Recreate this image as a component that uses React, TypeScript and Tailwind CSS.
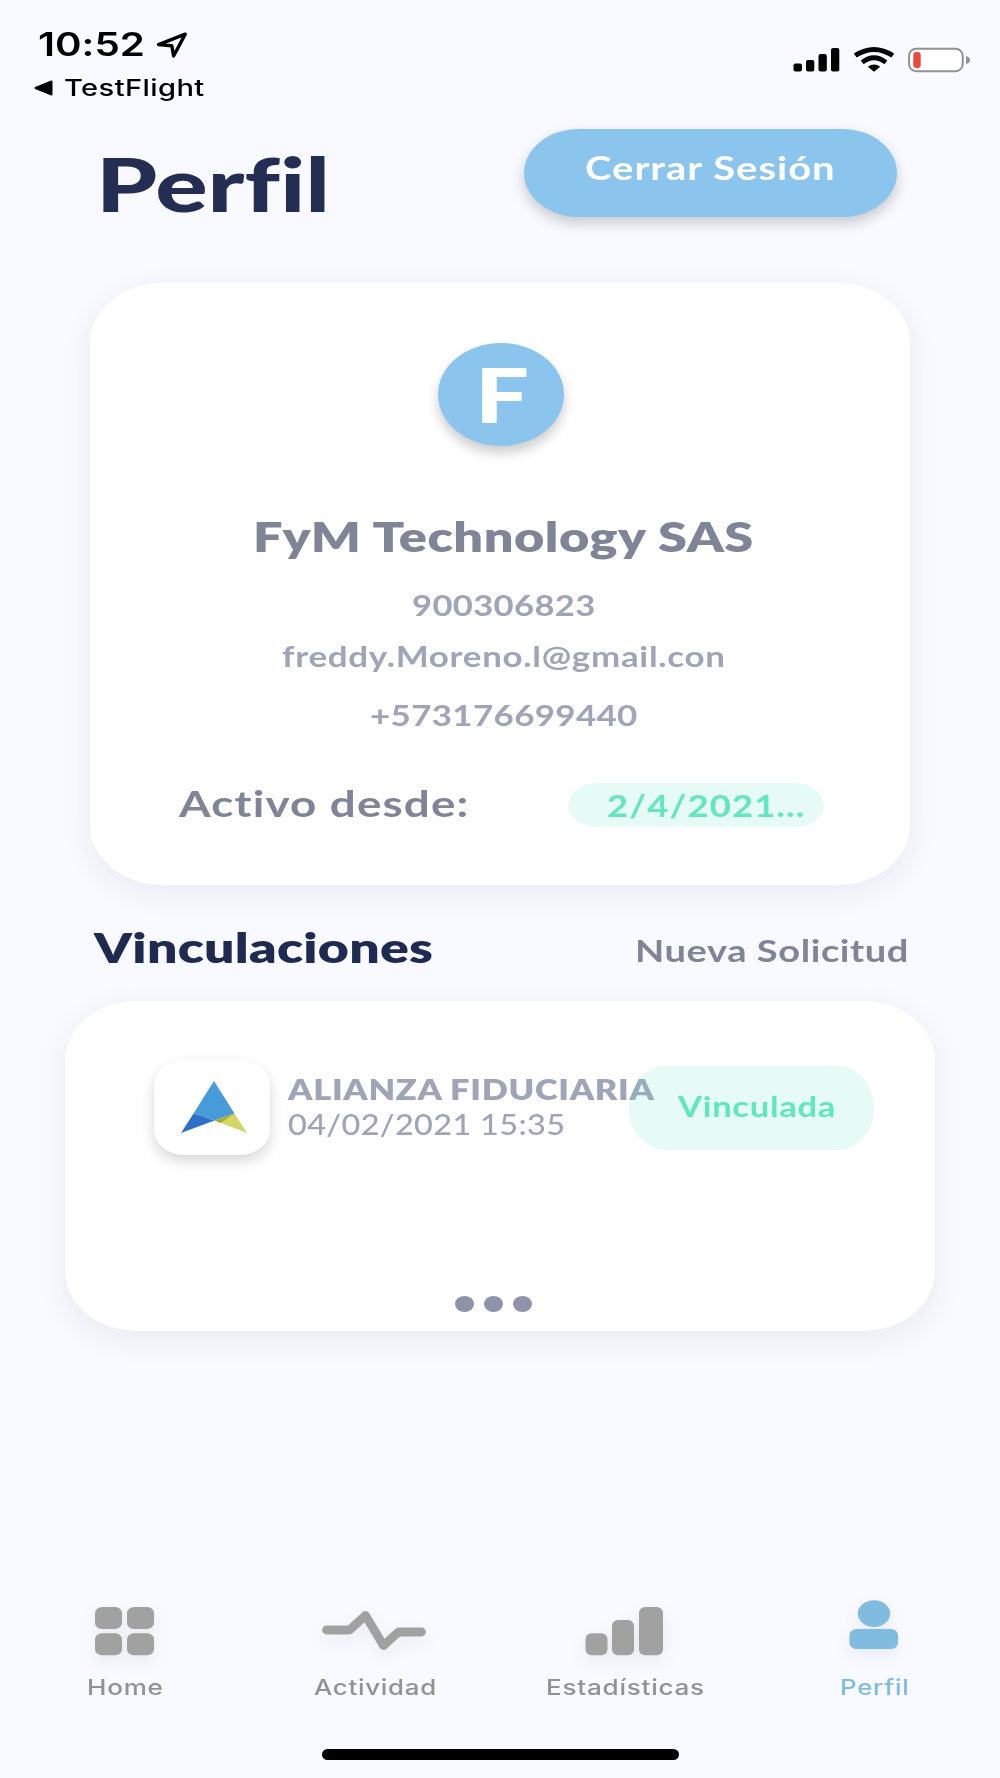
import { useLayoutEffect, useRef, useState } from "react";
import type { ReactNode } from "react";
import clsx from "clsx";

type FitTextProps = {
  width: number;
  className?: string;
  children: string;
};

// Wide lettering: stretches one line of text to the given width
const FitText = ({ width, className, children }: FitTextProps) => {
  const ref = useRef<HTMLSpanElement>(null);
  const [scale, setScale] = useState(1);

  useLayoutEffect(() => {
    if (ref.current) {
      setScale(width / ref.current.offsetWidth);
    }
  }, [width, children]);

  return (
    <div className={clsx("shrink-0 text-left whitespace-nowrap", className)} style={{ width }}>
      <span ref={ref} className="inline-block origin-left" style={{ transform: `scaleX(${scale})` }}>
        {children}
      </span>
    </div>
  );
};

const StatusBar = () => (
  <header className="flex h-[129px] justify-between pl-[34px] pr-[30px] font-['Inter',sans-serif] text-black">
    <div className="pt-[29px]">
      <div className="flex items-center">
        <FitText width={107} className="ml-1 text-[32px] leading-8 font-semibold">10:52</FitText>
        <svg width="34" height="28" viewBox="0 0 34 28" className="-mt-[2px] ml-[10px]" fill="none">
          <path d="M3.5 14.6 30.2 4.2 18.6 26 16.8 15.8Z" stroke="black" strokeWidth="3.4" strokeLinejoin="round" />
        </svg>
      </div>
      <div className="mt-[15px] flex items-center">
        <svg width="19" height="16" viewBox="0 0 19 16">
          <path d="M1.5 8 17.5 1.5V14.5Z" stroke="black" strokeWidth="2" strokeLinejoin="round" />
        </svg>
        <FitText width={141} className="ml-[11px] text-[22.5px] leading-6 font-medium tracking-[0.3px]">TestFlight</FitText>
      </div>
    </div>
    <svg width="178" height="26" viewBox="0 0 178 26" className="mt-[47px]">
      <rect x="1.5" y="16.5" width="8.5" height="8" rx="2" />
      <rect x="14" y="13" width="8.3" height="11.5" rx="2" />
      <rect x="26.5" y="7" width="8.3" height="17.5" rx="2" />
      <rect x="39" y="1" width="8.3" height="23.5" rx="2" />
      <g fill="none" stroke="black" strokeWidth="4.8">
        <path d="M63.2 8.6Q82 -3.6 100.8 8.6" />
        <path d="M70.2 15.4Q82 6.2 93.8 15.4" />
      </g>
      <path d="M75.8 19.8Q82 15 88.2 19.8L82 24.8Z" />
      <rect x="117.1" y="1.8" width="53.6" height="22.4" rx="7" fill="white" stroke="#929296" strokeWidth="2" />
      <rect x="121.3" y="5" width="7.4" height="16" rx="3" fill="#ea4a3b" />
      <path d="M174 9Q178 10 178 13T174 17Z" fill="#929296" />
    </svg>
  </header>
);

const TitleRow = () => (
  <div className="flex h-[88px] items-start justify-between pl-[96px] pr-[103px]">
    <FitText width={234} className="mt-[15px] text-[74px] leading-[80px] font-black text-[#232e52]">Perfil</FitText>
    <button className="flex h-[88px] w-[373px] justify-center rounded-[55px/44px] bg-[#8bc5ee] pt-[18px] shadow-[0_6px_14px_rgba(0,0,0,0.2)]">
      <FitText width={251} className="text-[33px] leading-10 font-bold tracking-[0.025em] text-white">Cerrar Sesión</FitText>
    </button>
  </div>
);

const ProfileCard = () => (
  <section className="mt-[66px] ml-[90px] flex h-[602px] w-[820px] flex-col items-center rounded-[72px/60px] bg-white pt-[60px] shadow-[0_8px_30px_rgba(40,45,80,0.07)]">
    <div className="ml-[2px] flex h-[103px] w-[126px] justify-center rounded-[50%] bg-[#8bc5ee] shadow-[0_7px_12px_rgba(0,0,0,0.2)]">
      <FitText width={54} className="ml-[2px] text-[76px] leading-[102px] font-black text-white">F</FitText>
    </div>
    <div className="flex flex-col items-center pl-[7px] text-[#9fa4b7]">
      <FitText width={501} className="mt-[67px] text-[41px] leading-[48px] font-extrabold tracking-[0.01em] text-[#7f8596]">
        FyM Technology SAS
      </FitText>
      <FitText width={184} className="mt-[28px] text-[28px] leading-8 font-bold tracking-[0.01em]">900306823</FitText>
      <FitText width={444} className="mt-[19px] text-[28px] leading-8 font-bold tracking-[0.02em]">freddy.Moreno.l@gmail.con</FitText>
      <FitText width={268} className="mt-[27px] text-[28px] leading-8 font-bold tracking-[0.01em]">+573176699440</FitText>
    </div>
    <div className="mt-[52px] flex w-full items-start justify-between pl-[89px] pr-[86px]">
      <FitText width={290} className="text-[36px] leading-[40px] font-bold tracking-[0.025em] text-[#7f8596]">Activo desde:</FitText>
      <div className="h-11 w-64 rounded-[30px/22px] bg-[#e6fbf6] pl-[39px]">
        <FitText width={199} className="text-[30px] leading-[44px] font-bold tracking-[0.03em] text-[#62e7c0]">2/4/2021...</FitText>
      </div>
    </div>
  </section>
);

const AlianzaLogo = () => (
  <div className="flex h-[95px] w-[116px] shrink-0 items-center justify-center rounded-[30px/25px] bg-white shadow-[0_6px_14px_rgba(0,0,0,0.16)]">
    <svg width="66" height="52" viewBox="0 0 66 52" className="-mt-[2px] ml-[3px]">
      <path d="M33 0 12.5 32.5 33.5 39.5 53.5 32.5Z" fill="#479bd9" />
      <path d="M12.5 32.5 0 52 33.5 39.5Z" fill="#2f6fc8" />
      <path d="M53.5 32.5 66 52 33.5 39.5Z" fill="#d3d767" />
      <path d="M53.5 32.5 33.5 39.5 39.5 42Z" fill="#a9a83a" />
    </svg>
  </div>
);

const Vinculaciones = () => (
  <section className="mt-[38px]">
    <div className="flex h-12 items-start justify-between pl-[94px] pr-[91px]">
      <FitText width={339} className="text-[42px] leading-[49px] font-extrabold tracking-[0.005em] text-[#1f2a50]">Vinculaciones</FitText>
      <FitText width={274} className="text-[30px] leading-[55px] font-bold tracking-[0.015em] text-[#7f8596]">Nueva Solicitud</FitText>
    </div>
    <div className="mt-[30px] ml-[65px] h-[330px] w-[870px] rounded-[72px/60px] bg-white pt-[59px] shadow-[0_8px_30px_rgba(40,45,80,0.08)]">
      <div className="flex h-[95px] items-start pl-[89px]">
        <AlianzaLogo />
        <div className="mt-3 ml-[18px] text-[28.5px] leading-[35px] text-[#9fa4b7]">
          <FitText width={367} className="font-extrabold tracking-[0.02em]">ALIANZA FIDUCIARIA</FitText>
          <FitText width={277} className="font-medium tracking-[0.01em]">04/02/2021 15:35</FitText>
        </div>
        <div className="z-10 mt-[6px] -ml-[26px] flex h-[84px] w-[245px] shrink-0 justify-center rounded-[36px/42px] bg-[#64e6c8]/16">
          <FitText width={158} className="ml-[10px] text-[28px] leading-[81px] font-bold tracking-[0.02em] text-[#5fe8bf]">Vinculada</FitText>
        </div>
      </div>
      <div className="mt-[141px] flex gap-[10px] pl-[390px]">
        <span className="h-4 w-[19px] rounded-[50%] bg-[#8f93a8]" />
        <span className="h-4 w-[19px] rounded-[50%] bg-[#8f93a8]" />
        <span className="h-4 w-[19px] rounded-[50%] bg-[#8f93a8]" />
      </div>
    </div>
  </section>
);

type Tab = {
  name: string;
  width: number;
  active?: boolean;
  icon: ReactNode;
};

const tabs: Tab[] = [
  {
    name: "Home",
    width: 77,
    icon: (
      <>
        <rect x="30" y="7" width="27" height="22" rx="7" ry="6" />
        <rect x="62" y="7" width="27" height="22" rx="7" ry="6" />
        <rect x="30" y="33.3" width="27" height="22" rx="7" ry="6" />
        <rect x="62" y="33.3" width="27" height="22" rx="7" ry="6" />
      </>
    ),
  },
  {
    name: "Actividad",
    width: 123,
    icon: (
      <path
        d="M11.5 30H34.5L50.5 15.5 68.5 45.5 83.5 32H106.5"
        fill="none"
        stroke="currentColor"
        strokeWidth="8.8"
        strokeLinecap="round"
        strokeLinejoin="round"
      />
    ),
  },
  {
    name: "Estadísticas",
    width: 159,
    icon: (
      <>
        <rect x="20.5" y="33.3" width="22" height="22" rx="6" />
        <rect x="47" y="20" width="22" height="35.3" rx="6" />
        <rect x="74" y="7" width="24" height="48.3" rx="6" />
      </>
    ),
  },
  {
    name: "Perfil",
    width: 69,
    active: true,
    icon: (
      <>
        <ellipse cx="59" cy="13.6" rx="16.2" ry="13.3" />
        <rect x="34.5" y="29" width="48.5" height="20" rx="7" ry="6" />
      </>
    ),
  },
];

const TabBar = () => (
  <nav className="mt-[269px] grid grid-cols-4 font-['Inter',sans-serif]">
    {tabs.map((tab) => (
      <div
        key={tab.name}
        className={clsx("flex flex-col items-center", tab.active ? "text-[#7fbce0]" : "text-[#a1a1a1]")}
      >
        <svg
          width="120"
          height="60"
          viewBox="0 0 120 60"
          fill="currentColor"
          className="overflow-visible drop-shadow-[0_6px_8px_rgba(0,0,0,0.06)]"
        >
          {tab.icon}
        </svg>
        <FitText
          width={tab.width}
          className={clsx(
            "mt-[14px] text-[21px] leading-7 font-medium tracking-[0.6px]",
            tab.active ? "-ml-[2px]" : "text-[#929292]"
          )}
        >
          {tab.name}
        </FitText>
      </div>
    ))}
  </nav>
);

const App = () => {
  return (
    <main className="flex h-[1778px] w-[1000px] flex-col overflow-hidden bg-[#f9faff] font-['Lato',sans-serif] [font-variant-ligatures:none]">
      <StatusBar />
      <TitleRow />
      <ProfileCard />
      <Vinculaciones />
      <TabBar />
      <div className="mt-[47px] ml-[322px] h-[11px] w-[357px] rounded-full bg-black" />
    </main>
  );
};

export default App;
